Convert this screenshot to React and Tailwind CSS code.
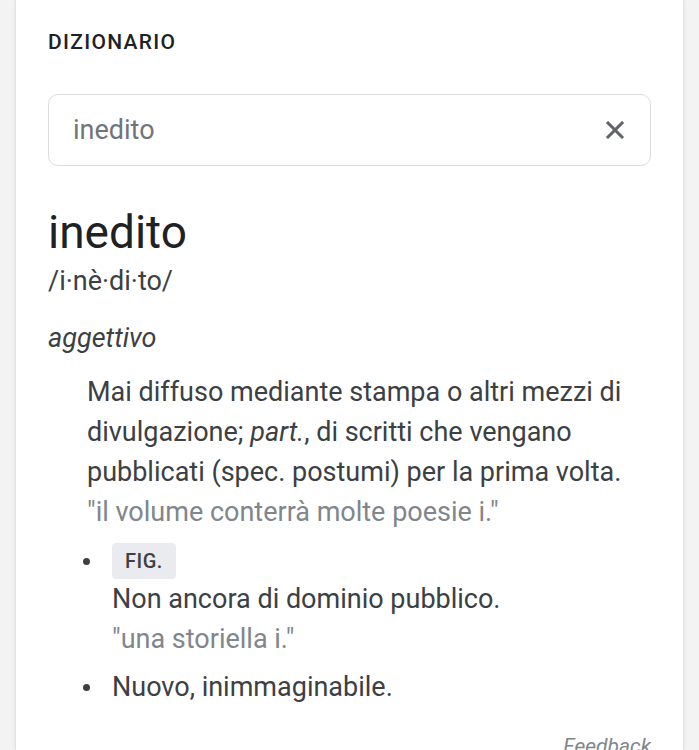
import React from "react";

export default function App() {
  const f = { fontFamily: "Roboto, 'Noto Sans', Arial, sans-serif" };
  return (
    <div style={f} className="h-[750px] overflow-hidden bg-[#f3f3f3] px-[15px]">
      <div className="h-full bg-white border-x border-[#e2e2e2] shadow-[0_0_4px_rgba(0,0,0,0.08)] px-8 pt-[29px] flex flex-col">
        <div className="text-[21px] font-medium leading-[26px] text-[#202124] tracking-[1.3px]">DIZIONARIO</div>
        <div className="mt-[39px] h-[72px] shrink-0 border border-[#dadce0] rounded-[10px] flex items-center pl-[24px] pr-[20px]">
          <div className="flex-1 text-[27px] text-[#70757a]">inedito</div>
          <svg width="30" height="30" viewBox="0 0 24 24" className="text-[#5f6368]">
            <path d="M19 6.41 17.59 5 12 10.59 6.41 5 5 6.41 10.59 12 5 17.59 6.41 19 12 13.41 17.59 19 19 17.59 13.41 12z" fill="currentColor" stroke="currentColor" strokeWidth="0.5" />
          </svg>
        </div>
        <div className="mt-[38px] text-[46px] leading-[56px] text-[#202124]">inedito</div>
        <div className="mt-[4px] text-[27px] leading-[34px] text-[#3c4043]">/i·nè·di·to/</div>
        <div className="mt-[23px] text-[27px] leading-[34px] italic text-[#3c4043]">aggettivo</div>
        <div className="pl-[39px] mt-[17px] text-[27px] leading-[40px] text-[#3c4043]">
          <div>
            Mai diffuso mediante stampa o altri mezzi di divulgazione; <i>part.</i>, di scritti che vengano pubblicati (spec. postumi) per la prima volta.
          </div>
          <div className="text-[#80868b]">"il volume conterrà molte poesie i."</div>
          <ul className="mt-[11px]">
            <li className="flex">
              <div className="w-[25px] shrink-0 h-[36px] flex items-center">
                <span className="block w-[7px] h-[7px] rounded-full bg-[#3c4043] -ml-[4px]"></span>
              </div>
              <div>
                <div className="w-fit bg-[#eaebee] rounded-[4px] px-[13px] text-[20px] leading-[36px] font-medium tracking-[0.5px] text-[#3c4043]">FIG.</div>
                <div>Non ancora di dominio pubblico.</div>
                <div className="text-[#80868b]">"una storiella i."</div>
              </div>
            </li>
            <li className="flex mt-[8px]">
              <div className="w-[25px] shrink-0 h-[40px] flex items-center">
                <span className="block w-[7px] h-[7px] rounded-full bg-[#3c4043] -ml-[4px]"></span>
              </div>
              <div>Nuovo, inimmaginabile.</div>
            </li>
          </ul>
        </div>
        <div className="mt-auto text-right text-[21px] italic text-[#80868b] leading-[20px] translate-y-[6px]">Feedback</div>
      </div>
    </div>
  );
}
